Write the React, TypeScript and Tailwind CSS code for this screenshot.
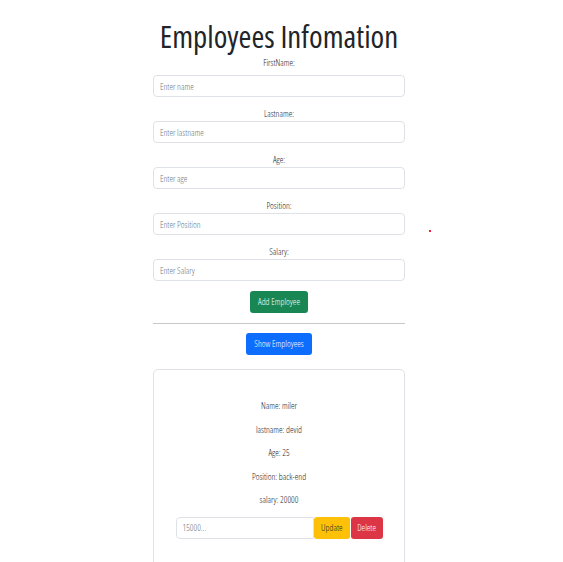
import { useState } from "react";

const fields = [
  { label: "FirstName:", placeholder: "Enter name" },
  { label: "Lastname:", placeholder: "Enter lastname" },
  { label: "Age:", placeholder: "Enter age" },
  { label: "Position:", placeholder: "Enter Position" },
  { label: "Salary:", placeholder: "Enter Salary" },
];

function Field({
  label,
  placeholder,
  first = false,
}: {
  label: string;
  placeholder: string;
  first?: boolean;
}) {
  return (
    <div className={`flex flex-col ${first ? "" : "mt-[12px]"}`}>
      <label
        className={`text-[9px] leading-[10px] text-[#212529] text-center ${
          first ? "mb-[7px]" : "mb-[2px]"
        }`}
      >
        {label}
      </label>
      <input
        type="text"
        placeholder={placeholder}
        className="h-[22px] w-full rounded-[4px] border border-[#dee2e6] bg-white px-[6px] text-[9px] text-[#212529] placeholder:text-[#6c757d] focus:outline-none"
      />
    </div>
  );
}

export default function App() {
  const [salary, setSalary] = useState("");

  return (
    <div
      className="relative min-h-[562px] w-full bg-white pr-[5px] font-[350] font-stretch-condensed text-[#212529]"
      style={{ fontFamily: '"Open Sans", "Noto Sans", sans-serif' }}
    >
      <span className="absolute left-[429px] top-[230px] block h-[2px] w-[2px] bg-[#f0203a]" />
      <div className="mx-auto flex w-[252px] flex-col pt-[14px]">
        <h1 className="whitespace-nowrap text-center text-[31px] leading-[44px] font-normal text-[#212529]">
          Employees Infomation
        </h1>
        {fields.map((f, i) => (
          <Field key={f.label} label={f.label} placeholder={f.placeholder} first={i === 0} />
        ))}
        <button className="mx-auto mt-[10px] h-[22px] rounded-[3px] bg-[#198754] px-[8px] text-[9px] text-white">
          Add Employee
        </button>
        <hr className="mt-[10px] border-t border-[#c8c8c8]" />
        <button className="mx-auto mt-[9px] h-[22px] rounded-[3px] bg-[#0d6efd] px-[8px] text-[9px] text-white">
          Show Employees
        </button>
        <div className="mt-[14px] flex h-[200px] flex-col items-center rounded-[5px] border border-[#dee2e6] pt-[30px]">
          {["Name: miler", "lastname: devid", "Age: 25", "Position: back-end", "salary: 20000"].map(
            (t) => (
              <p key={t} className="h-[23.5px] text-[9px] leading-[12px] text-[#212529]">
                {t}
              </p>
            )
          )}
          <div className="mt-[-1px] flex w-[207px] items-stretch">
            <input
              type="text"
              value={salary}
              onChange={(e) => setSalary(e.target.value)}
              placeholder="15000..."
              className="h-[22px] w-[139px] rounded-l-[4px] border border-[#dee2e6] px-[6px] text-[9px] placeholder:text-[#6c757d] focus:outline-none"
            />
            <button className="h-[22px] w-[36px] rounded-[3px] bg-[#ffc107] text-[9px] text-[#212529]">
              Update
            </button>
            <button className="ml-px h-[22px] w-[32px] rounded-[3px] bg-[#dc3545] text-[9px] text-white">
              Delete
            </button>
          </div>
        </div>
      </div>
    </div>
  );
}
